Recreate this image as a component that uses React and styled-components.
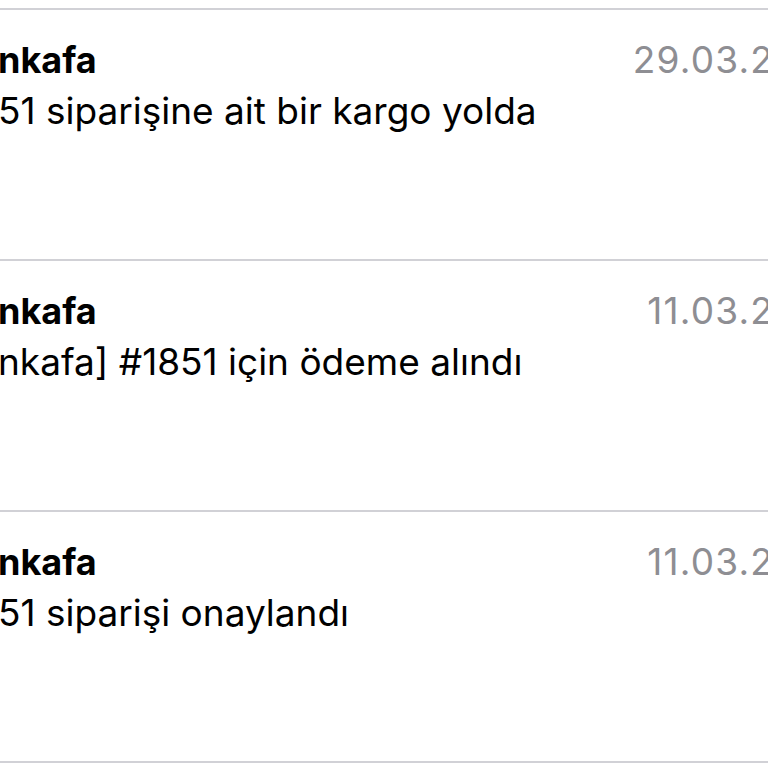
import React from 'react';
import styled, { createGlobalStyle } from 'styled-components';

const GlobalStyle = createGlobalStyle`
  html, body {
    margin: 0;
    padding: 0;
    background: #fff;
  }
  body {
    width: 768px;
    height: 768px;
    overflow: hidden;
    font-family: Inter, "Noto Sans", "Liberation Sans", sans-serif;
    -webkit-font-smoothing: antialiased;
  }
`;

const mails = [
  { id: 1, sender: 'nkafa', date: '29.03.2019', subject: '51 siparişine ait bir kargo yolda' },
  { id: 2, sender: 'nkafa', date: '11.03.2019', subject: 'nkafa] #1851 için ödeme alındı' },
  { id: 3, sender: 'nkafa', date: '11.03.2019', subject: '51 siparişi onaylandı' },
];

function App() {
  return (
    <>
      <GlobalStyle />
      <MailList>
        {mails.map(mail => (
          <MailRow key={mail.id}>
            <MailHeader>
              <Sender>{mail.sender}</Sender>
              <MailDate>{mail.date}</MailDate>
            </MailHeader>
            <Subject>{mail.subject}</Subject>
          </MailRow>
        ))}
      </MailList>
    </>
  );
}

export default App;

const MailList = styled.ul`
  list-style: none;
  margin: 8px 0 0 -2px;
  padding: 0;
  border-top: 2px solid #d1d1d6;
`;

const MailRow = styled.li`
  height: 251px;
  box-sizing: border-box;
  padding-top: 28px;
  border-bottom: 2px solid #d1d1d6;
`;

const MailHeader = styled.div`
  display: flex;
  justify-content: space-between;
  align-items: baseline;
  margin-right: -71px;
`;

const Sender = styled.span`
  font-size: 36px;
  line-height: 44px;
  font-weight: 700;
  color: #000;
  white-space: nowrap;
`;

const MailDate = styled.span`
  font-size: 37px;
  line-height: 44px;
  letter-spacing: 1.2px;
  color: #8e8e93;
  white-space: nowrap;
`;

const Subject = styled.div`
  margin-top: 7px;
  font-size: 37px;
  line-height: 44px;
  color: #000;
  white-space: nowrap;
`;
